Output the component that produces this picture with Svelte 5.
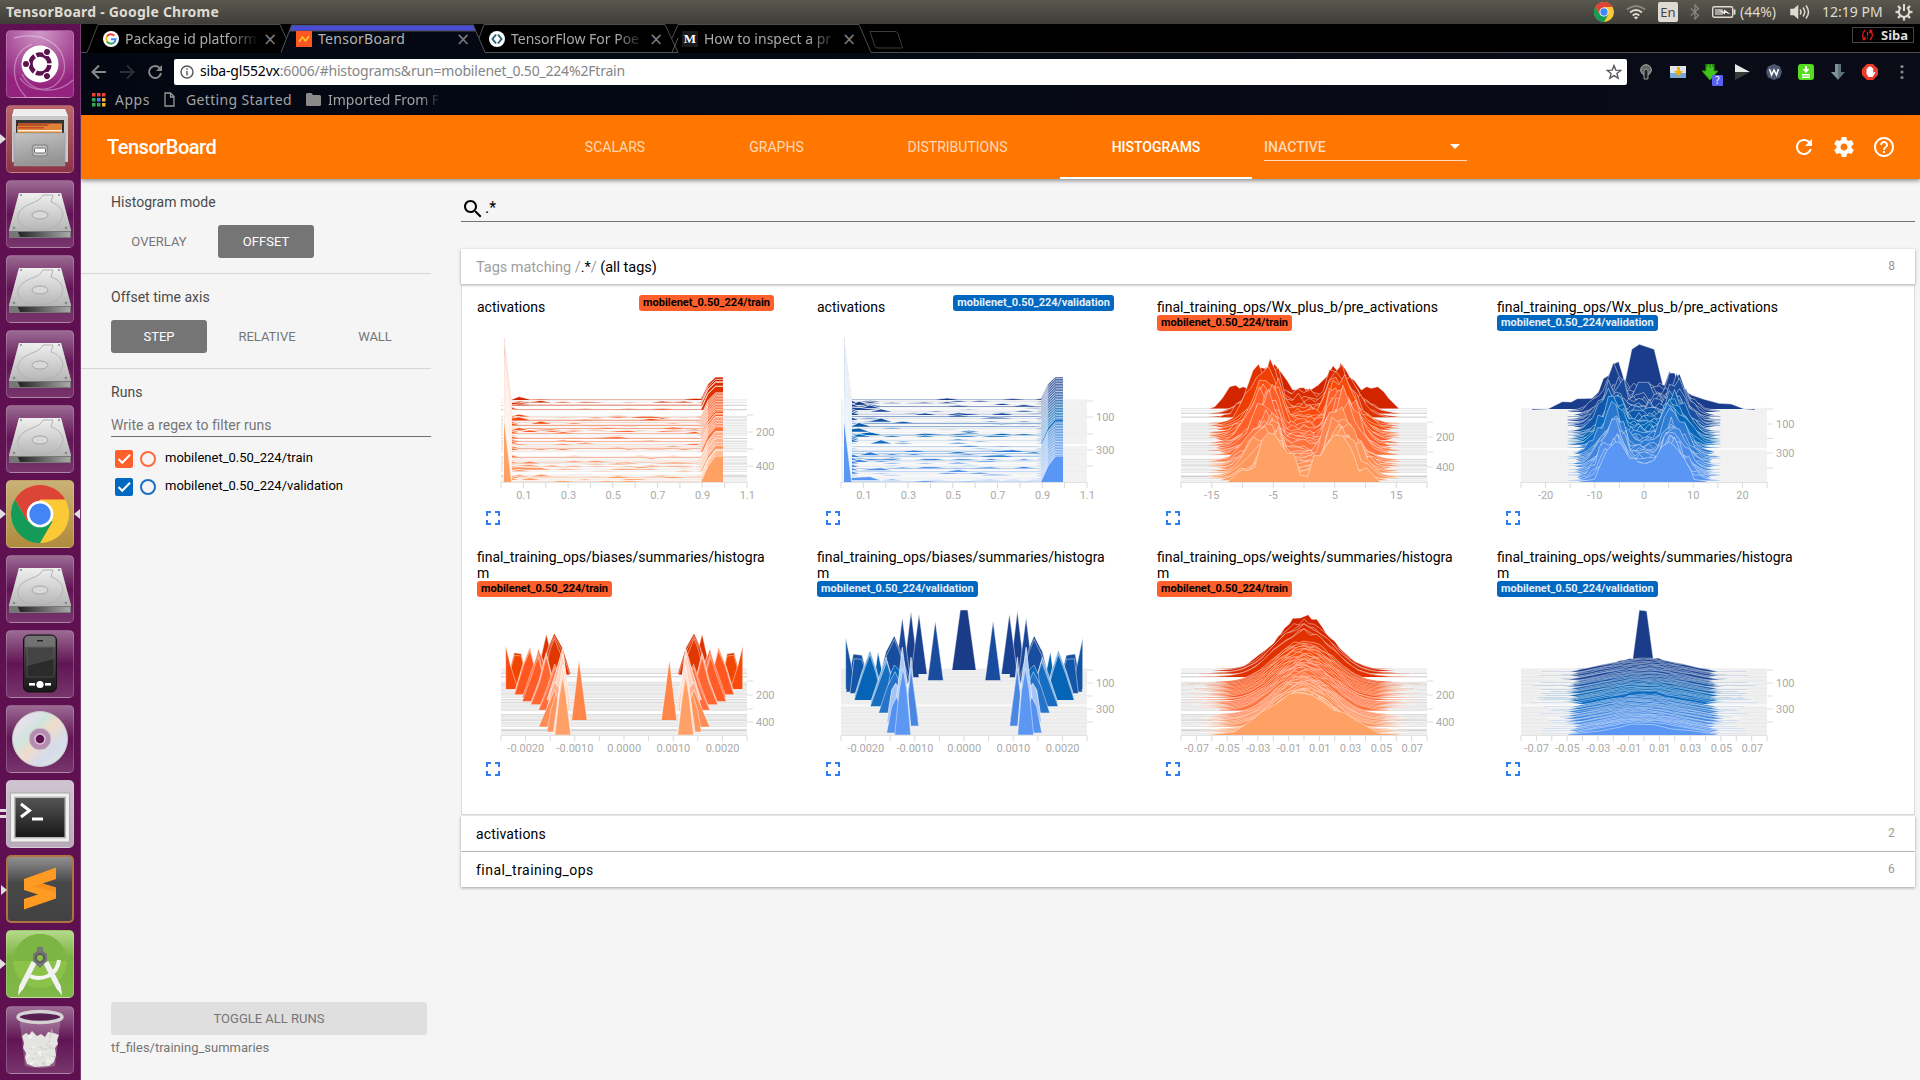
<script>
  function rng(seed) {
    let s = seed;
    return () => {
      s = (s * 1664525 + 1013904223) % 4294967296;
      return s / 4294967296;
    };
  }

  const trainStops = [[0, [211, 36, 0]], [0.15, [228, 52, 0]], [0.3, [250, 76, 10]], [0.5, [255, 98, 45]], [0.75, [255, 130, 76]], [1, [255, 160, 100]]];
  const validStops = [[0, [26, 60, 138]], [0.2, [26, 76, 158]], [0.45, [2, 102, 184]], [0.55, [30, 114, 202]], [0.8, [72, 138, 228]], [1, [90, 150, 243]]];

  function color(stops, t) {
    for (let i = 1; i < stops.length; i++) {
      if (t <= stops[i][0]) {
        const [a, ca] = stops[i - 1];
        const [b, cb] = stops[i];
        const f = (t - a) / (b - a);
        return `rgb(${ca.map((v, k) => Math.round(v + (cb[k] - v) * f)).join(',')})`;
      }
    }
    return `rgb(${stops[stops.length - 1][1].join(',')})`;
  }

  const trainSteps = [0, 0.03, 0.06, 0.068, 0.115, 0.12, 0.2, 0.215, 0.235, 0.25, 0.27, 0.29, 0.31, 0.33, 0.35, 0.37, 0.39, 0.41, 0.43, 0.465, 0.47, 0.5, 0.51, 0.53, 0.55, 0.57, 0.59, 0.61, 0.63, 0.69, 0.7, 0.72, 0.74, 0.76, 0.775, 0.785, 0.81, 0.83, 0.85, 0.87, 0.915, 0.925, 0.932, 0.95, 0.975, 1];
  const validSteps = Array.from({ length: 50 }, (_, i) => i / 49).filter((t) => Math.abs(t - 0.551) > 0.009);

  const toPath = (pts) => 'M' + pts.map(([x, y]) => `${x.toFixed(1)} ${y.toFixed(1)}`).join('L');

  function series(pts, base, fill) {
    const line = toPath(pts);
    return { line, area: `${line}L${pts[pts.length - 1][0].toFixed(1)} ${base}L${pts[0][0].toFixed(1)} ${base}Z`, fill };
  }

  // Explicit outlines are given in a triple-height sketch space.
  const wide = (ox, oy, list) => list.map(([x, y]) => [(x - ox) * 0.497 + 24, oy + y / 3]);

  function activations(steps, stops, seed, amp) {
    const r = rng(seed);
    return steps.map((t, i) => {
      const base = 400 + 82 * t;
      const pts = [[27, base - 62 - r() * 3], [31, base - 30], [34.6, base - (r() < 0.35 ? 2.6 : 0.6) * amp]];
      const loud = r() < 0.28;
      const level = r() < 0.3 || i === 0 ? 0.7 : 0.1;
      for (let x = 42; x < 220; x += 11) {
        const early = x < 70 ? 1.6 : 0.7;
        pts.push([x, base - level - (r() < (loud ? 0.5 : 0.1) ? r() * 2.2 * early * amp : 0)]);
      }
      pts.push([224, base - 0.6 - (i ? 0 : 0.8)], [231, base - 16], [238.5, base - 23 - 3 * t], [246, base - 23 - 3 * t]);
      const s = series(pts, base, color(stops, t));
      // The narrow first bin reads as layered tints rather than solid colour.
      s.veil = i === steps.length - 1 ? null : `M26.5 ${base}V${(base - 65).toFixed(1)}L35 ${base}Z`;
      return s;
    });
  }

  function humps(steps, stops, seed, top, unit, first, last, floor, peak, spread) {
    const r = rng(seed);
    const n = steps.length;
    return steps.map((t, i) => {
      const base = top + (482 - top) * t;
      const fill = color(stops, t);
      if (i === 0) return series(first, base, fill);
      if (i === n - 1) return series(last, base, fill);
      const width = 1.5 + r() * 1.1;
      const l = peak * (0.65 + r() * 0.6);
      const rr = peak * (0.65 + r() * 0.6);
      const lc = -5.4 + (r() - 0.5) * 1.8;
      const rc = 5.4 + (r() - 0.5) * 1.8;
      const reach = r() < 0.55 ? spread : spread - 2.5 + r() * 1.5;
      const pts = [];
      for (let u = -reach; u <= reach + 0.1; u += reach / 15) {
        const c = u < 0 ? lc : rc;
        let h = (u < 0 ? l : rr) * (0.74 * Math.exp(-((u - c) ** 2) / (2 * width * width)) + 0.28 * Math.exp(-((Math.abs(u) - 7.5) ** 2) / 20));
        if (Math.abs(u) < 3.5) h = Math.max(h * 0.8, floor * (1 - t * 0.6));
        h *= 0.72 + r() * 0.52;
        if (Math.abs(u) > 11.5) h *= 0.7;
        if (Math.abs(u) > reach - 0.6) h = 0.3;
        pts.push([147 + u * unit, base - h]);
      }
      return series(pts, base, fill);
    });
  }

  function bells(steps, stops, seed, first, last, peakBack, peakFront, shape, reachUnits) {
    const r = rng(seed);
    const n = steps.length;
    return steps.map((t, i) => {
      const base = 669 + 66 * t;
      const fill = color(stops, t);
      if (i === 0) return series(first, base, fill);
      if (i === n - 1) return series(last, base, fill);
      const peak = peakBack + (peakFront - peakBack) * Math.min(1, t * 4);
      const reach = reachUnits + r() * 1.6 - 0.8 + (t > 0.2 && t < 0.6 ? 0.6 : 0);
      const stretch = (0.86 + r() * 0.2) * (0.94 + 0.08 * t);
      const pts = [];
      for (let u = -reach; u <= reach + 0.01; u += reach / 18) {
        let h = peak * shape(Math.abs(u), stretch) * (0.95 + r() * 0.1);
        if (Math.abs(u) > reach - 0.3) h = 0.1;
        pts.push([147 + u * 15.4, base - h]);
      }
      return series(pts, base, fill);
    });
  }

  // Polygons of one half, mirrored about the centre of the plot.
  function mirrored(list, shift) {
    const out = [];
    for (const { p, c, wash } of list) {
      const left = p.map(([x, y]) => [x / 3 - shift, 540 + y / 3]);
      const right = left.map(([x, y]) => [294.4 - x, y]);
      for (const pts of [left, right]) {
        const d = toPath(pts);
        out.push({ line: d, area: d + 'Z', fill: c, wash });
      }
    }
    return out;
  }

  const biasTrain = mirrored([
    { p: [[262, 402], [289, 282], [318, 402]], c: '#de3300' },
    { p: [[268, 402], [296, 318], [313, 280], [338, 325], [362, 402]], c: '#d42c00' },
    { p: [[270, 404], [296, 325], [313, 289], [335, 330], [359, 404]], c: '#e03400' },
    { p: [[280, 412], [300, 330], [313, 296], [333, 345], [350, 412]], c: '#e03800' },
    { p: [[180, 440], [183, 375], [193, 338], [214, 341], [222, 378], [240, 440]], c: '#e84000' },
    { p: [[182, 445], [184, 380], [194, 346], [214, 348], [222, 385], [242, 445]], c: '#f04600' },
    { p: [[167, 447], [167, 318], [181, 375], [204, 447]], c: '#f74a0c' },
    { p: [[240, 455], [254, 370], [265, 325], [280, 365], [300, 455]], c: '#ff6a38', wash: 1 },
    { p: [[192, 463], [218, 375], [240, 320], [252, 372], [275, 463]], c: '#ff8055', wash: 1 },
    { p: [[194, 463], [220, 378], [240, 332], [253, 380], [277, 463]], c: '#ff571f' },
    { p: [[217, 472], [242, 400], [264, 338], [280, 400], [296, 472]], c: '#ff6430' },
    { p: [[217, 484], [243, 412], [264, 350], [280, 410], [303, 484]], c: '#ff5c27' },
    { p: [[241, 493], [268, 420], [289, 340], [306, 410], [326, 493]], c: '#ff8358', wash: 1 },
    { p: [[243, 493], [269, 427], [289, 350], [306, 418], [326, 493]], c: '#ff6632' },
    { p: [[266, 509], [292, 440], [314, 372], [335, 410], [358, 509]], c: '#ff6b38' },
    { p: [[266, 509], [294, 446], [314, 382], [335, 420], [358, 509]], c: '#ff6e3c' },
    { p: [[291, 480], [318, 395], [338, 325], [350, 420], [362, 480]], c: '#ffb89b', wash: 1 },
    { p: [[300, 500], [322, 410], [338, 342], [351, 430], [362, 500]], c: '#ffd2bf', wash: 1 },
    { p: [[291, 510], [304, 450], [314, 425], [328, 445], [348, 510]], c: '#ffb091', wash: 1 },
    { p: [[365, 540], [387, 360], [411, 540]], c: '#ff8448' },
    { p: [[266, 560], [294, 495], [314, 450], [330, 500], [350, 560]], c: '#ff8c54' },
    { p: [[291, 575], [302, 510], [318, 460], [332, 500], [350, 575]], c: '#ff9660' },
    { p: [[310, 580], [330, 430], [338, 375], [348, 440], [362, 580]], c: '#ffd9c8', wash: 1 },
    { p: [[315, 584], [328, 470], [338, 410], [348, 470], [362, 584]], c: '#ffa066' }
  ], 27);

  const biasValid = [
    series([[135, 670], [143.3, 610], [150.7, 610], [159, 670]], 670, '#1a3c88'),
    ...mirrored([
      { p: [[309, 412], [333, 214], [357, 412]], c: '#1a3f8d' },
      { p: [[333, 402], [357, 222], [381, 402]], c: '#1a4292' },
      { p: [[283, 425], [307, 233], [332, 425]], c: '#1a4797' },
      { p: [[383, 421], [406, 243], [430, 421]], c: '#1a4c9e' },
      { p: [[235, 425], [258, 335], [283, 287], [300, 330], [330, 425]], c: '#1a4694' },
      { p: [[238, 430], [260, 345], [283, 298], [300, 340], [325, 430]], c: '#194d9e' },
      { p: [[138, 455], [160, 342], [186, 346], [215, 455]], c: '#17509f' },
      { p: [[137, 448], [137, 293], [152, 365], [168, 448]], c: '#1253a3' },
      { p: [[150, 460], [162, 356], [186, 358], [215, 460]], c: '#1256aa' },
      { p: [[215, 470], [234, 335], [262, 470]], c: '#0563b2' },
      { p: [[163, 470], [186, 395], [210, 330], [228, 385], [250, 470]], c: '#5f9bd2', wash: 1 },
      { p: [[163, 480], [187, 405], [210, 343], [228, 400], [250, 480]], c: '#0664b6' },
      { p: [[211, 490], [238, 410], [258, 352], [275, 410], [295, 490]], c: '#67a2dc', wash: 1 },
      { p: [[211, 499], [238, 425], [260, 365], [276, 420], [298, 499]], c: '#176dc0' },
      { p: [[255, 500], [270, 405], [283, 375], [298, 390], [312, 500]], c: '#0868bc' },
      { p: [[236, 518], [262, 440], [285, 395], [305, 440], [330, 518]], c: '#2574ca' },
      { p: [[260, 545], [275, 450], [287, 430], [305, 460], [330, 545]], c: '#a4c5f5', wash: 1 },
      { p: [[300, 540], [325, 440], [333, 352], [342, 440], [356, 540]], c: '#82aeea', wash: 1 },
      { p: [[310, 557], [326, 450], [333, 385], [342, 450], [356, 557]], c: '#4a87e2' },
      { p: [[280, 560], [298, 400], [307, 322], [320, 420], [332, 560]], c: '#a9c8f6', wash: 1 },
      { p: [[260, 578], [275, 500], [290, 470], [300, 500], [312, 578]], c: '#5591ef' },
      { p: [[284, 584], [298, 450], [309, 385], [320, 450], [332, 584]], c: '#5b97f3' }
    ], 17)
  ];

  const preTrainFirst = wide(82, 280, [[140, 385], [150, 380], [165, 355], [180, 320], [192, 316], [200, 325], [207, 320], [220, 328], [230, 290], [238, 300], [245, 278], [258, 258], [262, 275], [270, 252], [285, 280], [297, 305], [307, 330], [325, 327], [345, 328], [358, 315], [375, 290], [388, 257], [398, 275], [403, 248], [418, 290], [430, 300], [445, 330], [455, 320], [465, 325], [478, 320], [490, 335], [500, 355], [520, 385]]);
  const preTrainLast = wide(82, 280, [[177, 604], [190, 588], [205, 568], [215, 572], [230, 562], [245, 480], [258, 458], [270, 462], [282, 490], [297, 520], [309, 520], [322, 585], [337, 590], [350, 525], [362, 528], [375, 495], [390, 465], [408, 468], [422, 500], [430, 525], [440, 574], [455, 563], [468, 585], [482, 604]]);
  const preValidFirst = wide(767, 280, [[790, 390], [820, 388], [850, 365], [868, 366], [880, 356], [910, 355], [930, 325], [945, 312], [960, 325], [973, 330], [990, 208], [1005, 193], [1035, 208], [1055, 330], [1068, 320], [1083, 312], [1095, 330], [1110, 345], [1135, 358], [1165, 370], [1190, 372], [1218, 388], [1237, 390]]);
  const preValidLast = wide(767, 280, [[885, 604], [915, 598], [925, 560], [940, 510], [958, 485], [968, 490], [985, 535], [995, 535], [1005, 548], [1020, 550], [1035, 540], [1050, 500], [1066, 485], [1080, 505], [1095, 535], [1110, 575], [1115, 598], [1140, 604]]);
  const weightTrainFirst = wide(82, 540, [[150, 387], [185, 385], [210, 378], [240, 343], [270, 310], [290, 265], [300, 252], [307, 235], [322, 234], [338, 224], [345, 238], [355, 238], [368, 265], [385, 310], [415, 343], [435, 370], [470, 385], [510, 387]]);
  const weightTrainLast = wide(82, 540, [[145, 583], [190, 575], [220, 545], [245, 515], [275, 490], [300, 462], [320, 458], [345, 465], [372, 490], [388, 510], [410, 518], [445, 550], [480, 580], [520, 583]]);
  const weightValidFirst = wide(767, 540, [[870, 387], [930, 384], [992, 356], [1005, 210], [1020, 213], [1033, 356], [1100, 384], [1150, 387]]);
  const weightValidLast = wide(767, 540, [[862, 583], [925, 573], [965, 562], [990, 552], [1035, 554], [1070, 567], [1110, 572], [1160, 583]]);

  const peaked = (u) => 1 / (1 + Math.exp((u - 2.1) * 1.25)) * 1.05;
  const tented = (u, k) => (u < 0.9 ? 1 : Math.max(0.012, 1 - (u - 0.9) / (4.1 * k)));

  const preValid = humps(validSteps, validStops, 41, 409, 4.92, preValidFirst, preValidLast, 24, 36, 15.5);
  preValid.splice(6, 0, series(wide(767, 280, [[955, 400], [975, 372], [990, 350], [1003, 307], [1024, 307], [1037, 350], [1055, 378], [1075, 400]]), 416, '#1b4a9b'));

  const tr = 'mobilenet_0.50_224/train';
  const va = 'mobilenet_0.50_224/validation';
  const every = (n, w) => Array.from({ length: n + 1 }, (_, i) => 24 + i * w);
  const labels = (list, start, gap) => list.map((text, i) => ({ text, x: start + i * gap }));

  const rightTrain = (ys) => ys.map((y, i) => ({ y, text: ['', '200', '', '400'][i] }));
  const rightValid = (ys) => ys.map((y, i) => ({ y, text: ['', '100', '', '300', ''][i] }));

  const biasLabels = labels(['-0.0020', '-0.0010', '0.0000', '0.0010', '0.0020'], 48.8, 49.2);
  const weightLabels = labels(['-0.07', '-0.05', '-0.03', '-0.01', '0.01', '0.03', '0.05', '0.07'], 39.6, 30.8);

  const charts = [
    { title: 'activations', run: tr, kind: 'train', float: true, row: 1, top: 400, steps: trainSteps, shapes: activations(trainSteps, trainStops, 7, 0.9), ticks: every(11, 22.36), labels: labels(['0.1', '0.3', '0.5', '0.7', '0.9', '1.1'], 46.8, 44.7), right: rightTrain([415, 432, 449, 466]) },
    { title: 'activations', run: va, kind: 'valid', float: true, row: 1, top: 400, steps: validSteps, shapes: activations(validSteps, validStops, 23, 1.1), ticks: every(11, 22.36), labels: labels(['0.1', '0.3', '0.5', '0.7', '0.9', '1.1'], 46.8, 44.7), right: rightValid([401, 417, 434, 450, 466]) },
    { title: 'final_training_ops/Wx_plus_b/pre_activations', run: tr, kind: 'train', row: 1, top: 408.5, steps: trainSteps, shapes: humps(trainSteps, trainStops, 11, 408.5, 6.15, preTrainFirst, preTrainLast, 21, 46, 15.5), ticks: every(8, 30.75), labels: labels(['-15', '-5', '5', '15'], 54.8, 61.5), right: rightTrain([422, 437, 452, 467]) },
    { title: 'final_training_ops/Wx_plus_b/pre_activations', run: va, kind: 'valid', row: 1, top: 408.5, steps: validSteps, shapes: preValid, ticks: every(10, 24.6), labels: labels(['-20', '-10', '0', '10', '20'], 48.6, 49.2), right: rightValid([409, 424, 438.5, 453, 468]) },
    { title: 'final_training_ops/biases/summaries/histogram', run: tr, kind: 'train', row: 2, top: 669, steps: trainSteps, shapes: biasTrain, ticks: every(10, 24.6), labels: biasLabels, right: rightTrain([681, 695, 709, 722]) },
    { title: 'final_training_ops/biases/summaries/histogram', run: va, kind: 'valid', row: 2, top: 669, steps: validSteps, shapes: biasValid, ticks: every(10, 24.6), labels: biasLabels, right: rightValid([670, 683, 696, 709, 722]) },
    { title: 'final_training_ops/weights/summaries/histogram', run: tr, kind: 'train', row: 2, top: 669, steps: trainSteps, shapes: bells(trainSteps, trainStops, 5, weightTrainFirst, weightTrainLast, 52, 41, peaked, 6.4), ticks: every(16, 15.375), labels: weightLabels, right: rightTrain([681, 695, 709, 722]) },
    { title: 'final_training_ops/weights/summaries/histogram', run: va, kind: 'valid', row: 2, top: 669, steps: validSteps, shapes: bells(validSteps, validStops, 9, weightValidFirst, weightValidLast, 12, 11.5, tented, 6), ticks: every(16, 15.375), labels: weightLabels, right: rightValid([670, 683, 696, 709, 722]), accent: true }
  ];

  const accentLine = toPath(wide(767, 540, [[890, 489], [915, 482], [950, 472], [975, 469], [988, 459], [1005, 457], [1038, 457], [1055, 468], [1095, 478], [1140, 489]]));

  const tiles = [
    { icon: 'dash' }, { icon: 'files', left: 1 }, { icon: 'disk' }, { icon: 'disk' }, { icon: 'disk' }, { icon: 'disk' },
    { icon: 'chrome', left: 1, right: 1 }, { icon: 'disk' }, { icon: 'phone' }, { icon: 'cd' }, { icon: 'term', left: 2 },
    { icon: 'sublime', left: 1 }, { icon: 'studio', left: 1 }, { icon: 'trash' }
  ];
  const rays = Array.from({ length: 8 }, (_, i) => i * 45);

  // Creases of the crumpled paper in the bin, as small facets.
  const pr = rng(77);
  const facets = Array.from({ length: 46 }, () => {
    const x = 20 + pr() * 28;
    const y = 29 + pr() * 28;
    const p = () => ((pr() - 0.5) * 9).toFixed(1);
    return { d: `M${x.toFixed(1)} ${y.toFixed(1)}l${p()} ${p()} ${p()} ${p()}z`, fill: pr() < 0.5 ? '#fff' : '#c4c4bf' };
  });
</script>

{#snippet chromeLogo()}
  <circle cx="24" cy="24" r="24" fill="#fbc936" />
  <path d="M3.2 12A24 24 0 0 1 44.8 12H24L13.6 30Z" fill="#db4437" />
  <path d="M3.2 12A24 24 0 0 0 24 48L34.4 30H13.6Z" fill="#139b57" />
  <circle cx="24" cy="24" r="11" fill="#fff" />
  <circle cx="24" cy="24" r="8.8" fill="#4285f4" />
{/snippet}

<div class="desktop">
  <svg class="defs" aria-hidden="true">
    <defs>
      <linearGradient id="metal" x1="0" y1="0" x2="0" y2="1"><stop offset="0" stop-color="#f0f0f0" /><stop offset="1" stop-color="#b5b5b5" /></linearGradient>
      <linearGradient id="steel" x1="0" y1="0" x2="0.3" y2="1"><stop offset="0" stop-color="#c4c4c4" /><stop offset="1" stop-color="#949494" /></linearGradient>
      <linearGradient id="dark" x1="0" y1="0" x2="0" y2="1"><stop offset="0" stop-color="#555" /><stop offset="1" stop-color="#181818" /></linearGradient>
      <linearGradient id="edge" x1="0" y1="0" x2="1" y2="0"><stop offset="0" stop-color="#222" /><stop offset="1" stop-color="#aaa" /></linearGradient>
      <linearGradient id="disc" x1="0" y1="0" x2="1" y2="1"><stop offset="0" stop-color="#e8e8e8" /><stop offset="0.2" stop-color="#e6e0ea" /><stop offset="0.35" stop-color="#cfe5dc" /><stop offset="0.5" stop-color="#f1dccb" /><stop offset="0.7" stop-color="#d5dcea" /><stop offset="1" stop-color="#e5e5e5" /></linearGradient>
    </defs>
  </svg>

  <div class="menubar">
    <span class="wtitle">TensorBoard - Google Chrome</span>
    <div class="tray">
      <svg class="t-chrome" viewBox="0 0 48 48" width="20" height="20">{@render chromeLogo()}</svg>
      <svg class="t-wifi" width="20" height="16" viewBox="0 0 20 16" fill="none" stroke-width="1.8"><path d="M1 5.500Q10-1.500 19 5.500" stroke="#8b887f" /><path d="M4 8.500Q10 3.500 16 8.500" stroke="#dfdbd2" /><path d="M6.700 11.500Q10 8.500 13.300 11.500" stroke="#dfdbd2" /><path d="M10 15.500l-2.200-2.200q2.200-1.600 4.400 0z" fill="#dfdbd2" /></svg>
      <span class="lang">En</span>
      <svg class="t-bt" width="10" height="16" viewBox="0 0 10 16" fill="none" stroke="#8b887f" stroke-width="1.2"><path d="M1 4.500l7.500 7L5 15V1l3.500 3.500-7.500 7" /></svg>
      <svg class="t-bat" width="24" height="14" viewBox="0 0 24 14"><rect x="0.7" y="1.7" width="20" height="10.6" rx="1.5" fill="none" stroke="#dfdbd2" stroke-width="1.4" /><rect x="3" y="4" width="8" height="6" fill="#a5a299" /><rect x="21.5" y="4.5" width="2" height="5" fill="#dfdbd2" /><path d="M6 4.500l6 2.500V4.500l7 5-6-2v2z" fill="#fff" /></svg>
      <span class="t-pct">(44%)</span>
      <svg class="t-vol" width="21" height="16" viewBox="0 0 21 16" fill="none" stroke="#dfdbd2" stroke-width="1.5"><path d="M1 5.500h3l3.500-3v11L4 10.500H1z" fill="#dfdbd2" /><path d="M10 5.500q2 2.500 0 5M13 3.500q3.500 4.500 0 9M16 1.500q5 6.500 0 13" /></svg>
      <span class="t-time">12:19 PM</span>
      <svg class="t-gear" width="18" height="18" viewBox="-9 -9 18 18" stroke="#dfdbd2" fill="none"><path d="M-3-4.500A5.200 5.200 0 1 0 3-4.500M0-8V-1" stroke-width="2" />{#each rays.slice(1) as a}<path d="M0-5.500V-8.500" stroke-width="2.200" transform="rotate({a})" />{/each}</svg>
    </div>
  </div>

  <div class="below">
    <nav class="launcher">
      {#each tiles as t}
        <div class="tile {t.icon}">
          {#if t.left === 1}<i class="tri"></i>{/if}
          {#if t.left === 2}<i class="bars"></i>{/if}
          {#if t.right}<i class="tri back"></i>{/if}
          <svg viewBox="0 0 68 68" width="68" height="68">
            {#if t.icon === 'dash'}
              <g fill="none" stroke="#fff" opacity="0.35" stroke-width="1.300"><path d="M8 8C40 0 62 18 58 42 52 62 26 66 14 48" /><path d="M20 67C2 48 6 22 26 14" /><path d="M67 50C50 66 24 62 16 44" /></g>
              <circle cx="34" cy="34" r="18.500" fill="#fff" />
              <circle cx="34" cy="34" r="9.500" fill="none" stroke="#5d1150" stroke-width="4.500" stroke-dasharray="17.900 2" stroke-dashoffset="-1" />
              {#each [0, 120, 240] as a}<circle cx="20" cy="34" r="3.600" fill="#5d1150" stroke="#fff" stroke-width="1.200" transform="rotate({a} 34 34)" />{/each}
            {:else if t.icon === 'files'}
              <path d="M6 11l2-7h51l3 7v46H6z" fill="#c9c9c9" /><path d="M6 11l2-7h51l3 7z" fill="#eee" /><path d="M10 15h48v16H10z" fill="#333" />
              <path d="M12 18h44v11H12z" fill="#b6532a" /><path d="M11 21h30l3-2h12v12H11z" fill="#df8436" /><path d="M12 22h26v1.500H12z" fill="#c4482a" /><path d="M12 25h44v1.500H12z" fill="#fff0d8" /><path d="M12 27.500h44V31H12z" fill="#d98b38" />
              <path d="M8 28h51v33H8z" fill="url(#steel)" stroke="#999" stroke-width="0.600" /><rect x="26.500" y="40" width="15" height="11" rx="3" fill="#ccc" stroke="#8c8c8c" stroke-width="1.600" /><rect x="28.500" y="43" width="11" height="5" rx="1" fill="#fff" stroke="#666" />
            {:else if t.icon === 'disk'}
              <path d="M13 13h42l10 37v7H3v-7z" fill="#a8a8a8" /><path d="M13 13h42l10 38H3z" fill="url(#metal)" /><path d="M3 51h62v7H3z" fill="#777" /><path d="M12 52h52v5H14z" fill="url(#edge)" />
              <path d="M37 15c-4 8-13 7-20 13-9 7-6 17 5 20 10 3 24 2 30-4 10-9 3-19-7-22l2-7z" fill="none" stroke="#b2b2b2" stroke-width="1" /><ellipse cx="34" cy="35" rx="8" ry="4" fill="#d8d8d8" stroke="#a5a5a5" />
              <circle cx="15" cy="15" r="1" fill="#888" /><circle cx="53" cy="15" r="1" fill="#888" /><circle cx="8" cy="48" r="1.300" fill="#888" /><circle cx="60" cy="48" r="1.300" fill="#888" />
            {:else if t.icon === 'chrome'}
              <g transform="translate(5 5) scale(1.210)">{@render chromeLogo()}</g>
            {:else if t.icon === 'phone'}
              <rect x="17.500" y="5" width="33" height="57" rx="5" fill="url(#dark)" stroke="#111" /><path d="M19 17V9q0-3 4-3h22q4 0 4 3v8z" fill="#8a8a8a" opacity="0.600" /><rect x="21" y="17" width="27" height="30" fill="#2b2b2b" stroke="#555" stroke-width="0.700" /><path d="M21 17h27v12L21 36z" fill="#fff" opacity="0.120" /><rect x="31" y="10" width="6" height="1.500" fill="#222" />
              <circle cx="34" cy="54.500" r="3.600" fill="#fff" /><rect x="23" y="53" width="6" height="2.600" fill="#fff" /><rect x="39" y="53" width="6" height="2.600" fill="#fff" />
            {:else if t.icon === 'cd'}
              <circle cx="34" cy="34" r="27.500" fill="url(#disc)" stroke="#c9c9c9" /><circle cx="34" cy="34" r="11" fill="#b58bb0" stroke="#ccc" /><circle cx="34" cy="34" r="5" fill="#5d1150" stroke="#d9c5d6" stroke-width="1.500" />
            {:else if t.icon === 'term'}
              <rect x="4.500" y="13" width="59" height="49" fill="#efefef" stroke="#aaa" /><rect x="8" y="16.500" width="52" height="42" fill="#b9b9b9" /><rect x="9.500" y="18" width="49" height="39" fill="url(#dark)" />
              <path d="M15 24l8.500 6.500L15 37" fill="none" stroke="#fff" stroke-width="3" /><path d="M26 39h11" stroke="#fff" stroke-width="3" />
            {:else if t.icon === 'sublime'}
              <path d="M18 24L50 12.500V24L36.500 28.500 50 32.500V43.500L18 54.500V44L32 39.500 18 35Z" fill="#ff9a22" /><path d="M36.500 28.500L50 32.500V37L27 31.500z" fill="#f08c18" opacity="0.700" />
            {:else if t.icon === 'studio'}
              <circle cx="34" cy="31" r="27" fill="#8bc34a" /><path d="M7 31a27 27 0 0 1 54 0z" fill="#7db545" />
              <path d="M24 46q8 4 18 0 10-5 11-16" fill="none" stroke="#f5f5f5" stroke-width="4" /><path d="M30 33L17 58l-4 5 1-7 12-24zM38 33l13 25 4 5-1-7-12-24z" fill="#f2f2f2" stroke="#f2f2f2" stroke-width="1.500" />
              <path d="M31 17h6v4l4 3v7l-7 7-7-7v-7l4-3z" fill="#757575" /><circle cx="34" cy="28" r="4" fill="#8bc34a" stroke="#5c5c5c" stroke-width="2" />
            {:else}
              <path d="M13 10h42l-6 50q-15 4-30 0z" fill="#fff" opacity="0.220" />
              <path d="M16 30l4-3 3 2 3-4 5 5 4-2 4 3 3-5 6 1 5 2-2 5 1 4-3 4 1 7-2 7-5 4-14 1-8-3-2-6 1-5-3-5 1-5z" fill="#e4e4e1" />
              {#each facets as f}<path d={f.d} fill={f.fill} opacity="0.600" />{/each}
              <ellipse cx="34" cy="11" rx="22" ry="5.500" fill="#572050" stroke="#d5d2d4" stroke-width="3.500" />
            {/if}
          </svg>
        </div>
      {/each}
    </nav>

    <div class="browser">
      <div class="tabs">
        <svg class="tabshape" width="1839" height="29" viewBox="81 24 1839 29" fill="none" stroke="#4d4d4d">
          <path d="M81 52.500H87L98 24.500H280L286 38" /><path d="M678 52.500L665 24.500H484L479 38M678 52.500H672" /><path d="M672 38L678 24.500H859L871 52.500H1920" />
          <path d="M281 53L292 24.500H473L485 53Z" fill="#030812" stroke="none" /><path d="M292 25H473L475.500 31H289.500Z" fill="#4a4dd4" /><path d="M281 52.500L292 24.500M473 24.500L485 52.500H672L678 38" stroke="#555" />
          <path d="M870 31.500H895Q897 31.500 898 33.500L902.500 48H878Q875.500 48 874.800 46Z" stroke="#3c3c3c" />
        </svg>
        <div class="tab">
          <svg width="16" height="16" viewBox="0 0 16 16" class="fav"><circle cx="8" cy="8" r="8" fill="#fff" /><g fill="none" stroke-width="2"><path d="M4 5.500A4.700 4.700 0 0 1 11.300 4.700" stroke="#ea4335" /><path d="M4 5.500A5 5 0 0 0 4 10.500" stroke="#fbbc05" /><path d="M4 10.500A4.700 4.700 0 0 0 11 11.500" stroke="#34a853" /><path d="M8 8.300H12.600Q12.500 10.500 11 11.500" stroke="#4285f4" /></g></svg>
          <span class="tt fade">Package id platform</span><span class="x">×</span>
        </div>
        <div class="tab">
          <svg width="16" height="16" viewBox="0 0 16 16" class="fav"><path d="M0 0h16v16H0z" fill="#ff5722" /><path d="M3 11l3.500-5 3 4L13 5" fill="none" stroke="#ffca28" stroke-width="1.500" /></svg>
          <span class="tt lit">TensorBoard</span><span class="x">×</span>
        </div>
        <div class="tab">
          <svg width="16" height="16" viewBox="0 0 16 16" class="fav"><circle cx="8" cy="8" r="8" fill="#fff" /><path d="M7 3.500L3.500 8 7 12.500M9 3.500L12.500 8 9 12.500" fill="none" stroke="#2b6675" stroke-width="2" /></svg>
          <span class="tt fade">TensorFlow For Poe</span><span class="x">×</span>
        </div>
        <div class="tab">
          <span class="fav medium">M</span>
          <span class="tt fade">How to inspect a pr</span><span class="x">×</span>
        </div>
        <div class="profile"><svg width="13" height="12" viewBox="0 0 13 12" fill="none" stroke="#e01818" stroke-width="1.300"><path d="M4 1Q-.5 6 3.500 10.500M1.500 10.500h2.500v-3M9 11q4.500-5 .5-9.500M11.500 1.500H9v3M6.500 3v4M6.500 8.500v1.300" /></svg><b>Siba</b></div>
      </div>

      <div class="toolbar">
        <svg class="nav" width="16" height="16" viewBox="0 0 16 16" fill="none" stroke="#8a8a8a" stroke-width="2"><path d="M15 8H2M8 1.500L1.500 8 8 14.500" /></svg>
        <svg class="nav" width="16" height="16" viewBox="0 0 16 16" fill="none" stroke="#2c2f35" stroke-width="2"><path d="M1 8h13M8 1.500L14.500 8 8 14.500" /></svg>
        <svg class="nav" width="16" height="16" viewBox="0 0 16 16"><path d="M13 4.500A6 6 0 1 0 14 9" fill="none" stroke="#8a8a8a" stroke-width="2" /><path d="M15 1v6H9z" fill="#8a8a8a" /></svg>
        <div class="url">
          <svg width="14" height="14" viewBox="0 0 14 14" fill="none" stroke="#555" stroke-width="1.400"><circle cx="7" cy="7" r="6" /><path d="M7 6v4.500M7 3.300v1.500" /></svg>
          <span class="addr"><b>siba-gl552vx</b>:6006/#histograms&amp;run=mobilenet_0.50_224%2Ftrain</span>
          <svg class="star" width="16" height="16" viewBox="0 0 16 16" fill="none" stroke="#555" stroke-width="1.300"><path d="M8 1.500l1.800 4.600 4.900.3-3.800 3.100 1.300 4.800L8 11.600l-4.200 2.700 1.300-4.800L1.300 6.400l4.900-.3z" /></svg>
        </div>
        <div class="ext">
          <svg viewBox="0 0 16 16"><circle cx="8" cy="6" r="5.300" fill="#666" stroke="#b0b0b0" /><path d="M6 6.500q2-3 4 0V15H6z" fill="#222" stroke="#999" /></svg>
          <svg viewBox="0 0 16 16"><path d="M0 2h16v12H0z" fill="#dfe3ea" /><path d="M0 9h16v5H0z" fill="#7ba7d3" /><path d="M7 3h3v4h3l-4.500 5L4 7h3z" fill="#f0b400" /></svg>
          <span class="dl"><svg viewBox="0 0 16 16"><path d="M4 0h8v7h4l-8 9-8-9h4z" fill="#43c41a" stroke="#2a9010" /><path d="M5 0v3M8 0v4M11 0v3" stroke="#1c6b08" /></svg><em>?</em></span>
          <svg viewBox="0 0 16 16"><path d="M1 0l15 8H1z" fill="#e8e8e8" /><path d="M1 16l15-8H1z" fill="#3a3a3a" /></svg>
          <svg viewBox="0 0 16 16"><path d="M8 0l6 2.500 2 5.500-2 5.500L8 16l-6-2.500L0 8l2-5.500z" fill="#4c5770" /><path d="M3.500 5l2 6L8 6l2.500 5 2-6" stroke="#fff" stroke-width="1.500" fill="none" /></svg>
          <svg viewBox="0 0 16 16"><rect width="16" height="16" rx="3" fill="#56dc1e" /><path d="M7 2h2v3h2.500L8 9 4.500 5H7zM4 10h8v1.500H4zM4 12.500h8V14H4z" fill="#fff" /></svg>
          <svg viewBox="0 0 16 16"><path d="M5 0h6v8h4l-7 8-7-8h4z" fill="#5f727c" /><path d="M5 0h3v15L1 8h4z" fill="#7f929b" /></svg>
          <svg viewBox="0 0 16 16"><path d="M5 0h6l5 5v6l-5 5H5l-5-5V5z" fill="#f0392b" /><path d="M4.500 7V4.500h1.300V3h1.400V2.300h1.400V3H10v1h1.200v5l1.300-1.200 1 .8L10.500 13H6.500L4.500 10z" fill="#fff" /></svg>
          <svg viewBox="0 0 16 16" fill="#858585"><circle cx="8" cy="2.500" r="1.600" /><circle cx="8" cy="8" r="1.600" /><circle cx="8" cy="13.500" r="1.600" /></svg>
        </div>
      </div>

      <div class="bookmarks">
        <svg width="14" height="14" viewBox="0 0 14 14"><g fill="#ea4335"><path d="M0 0h3.500v3.500H0zM5 0h3.500v3.500H5zM10 0h3.500v3.500H10z" /></g><path d="M0 5h3.500v3.500H0zM0 10h3.500v3.500H0zM5 10h3.500v3.500H5z" fill="#34a853" /><path d="M5 5h3.500v3.500H5z" fill="#4285f4" /><path d="M10 5h3.500v3.500H10zM10 10h3.500v3.500H10z" fill="#fbb03b" /></svg>
        <span class="bm apps">Apps</span>
        <svg width="11" height="15" viewBox="0 0 11 15" fill="none" stroke="#999" stroke-width="1.300"><path d="M1 1h5.500L10 4.500V14H1zM6.500 1v4H10" /></svg>
        <span class="bm start">Getting Started</span>
        <svg width="15" height="13" viewBox="0 0 15 13"><path d="M0 1.500Q0 0 1.500 0H5.500L7 2H13.500Q15 2 15 3.500V11.500Q15 13 13.500 13H1.500Q0 13 0 11.500z" fill="#8b8b8b" /></svg>
        <span class="bm import">Imported From F</span>
      </div>

      <header class="appbar">
        <span class="logo">TensorBoard</span>
        <span class="nt n1">SCALARS</span><span class="nt n2">GRAPHS</span><span class="nt n3">DISTRIBUTIONS</span><span class="nt n4 on">HISTOGRAMS</span>
        <div class="inactive"><span>INACTIVE</span><svg width="10" height="5" viewBox="0 0 10 5"><path d="M0 0h10L5 5z" fill="#fff" /></svg></div>
        <div class="actions">
          <svg viewBox="0 0 24 24"><path d="M17.650 6.350C16.200 4.900 14.210 4 12 4c-4.420 0-7.990 3.580-7.990 8s3.570 8 7.990 8c3.730 0 6.840-2.550 7.730-6h-2.080c-.82 2.330-3.040 4-5.650 4-3.310 0-6-2.690-6-6s2.690-6 6-6c1.660 0 3.140.69 4.220 1.780L13 11h7V4l-2.350 2.350z" /></svg>
          <svg viewBox="0 0 24 24"><path d="M19.430 12.980c.04-.32.07-.64.07-.98s-.03-.66-.07-.98l2.110-1.650c.19-.15.24-.42.12-.64l-2-3.460c-.12-.22-.39-.3-.61-.22l-2.490 1c-.52-.4-1.080-.73-1.690-.98l-.38-2.650C14.460 2.180 14.250 2 14 2h-4c-.25 0-.46.18-.49.42l-.38 2.650c-.61.25-1.170.59-1.690.98l-2.490-1c-.23-.09-.49 0-.61.22l-2 3.460c-.13.22-.07.49.12.64l2.110 1.650c-.04.32-.07.65-.07.98s.03.66.07.98l-2.110 1.650c-.19.15-.24.42-.12.64l2 3.460c.12.22.39.3.61.22l2.490-1c.52.4 1.080.73 1.690.98l.38 2.650c.03.24.24.42.49.42h4c.25 0 .46-.18.49-.42l.38-2.650c.61-.25 1.170-.59 1.690-.98l2.490 1c.23.09.49 0 .61-.22l2-3.460c.12-.22.07-.49-.12-.64l-2.110-1.650zM12 15.500c-1.930 0-3.500-1.570-3.500-3.500s1.570-3.500 3.500-3.500 3.500 1.570 3.500 3.500-1.570 3.500-3.500 3.500z" /></svg>
          <svg viewBox="0 0 24 24"><path d="M11 18h2v-2h-2v2zm1-16C6.480 2 2 6.480 2 12s4.480 10 10 10 10-4.480 10-10S17.520 2 12 2zm0 18c-4.410 0-8-3.590-8-8s3.590-8 8-8 8 3.590 8 8-3.590 8-8 8zm0-14c-2.210 0-4 1.790-4 4h2c0-1.100.9-2 2-2s2 .9 2 2c0 2-3 1.750-3 5h2c0-2.250 3-2.500 3-5 0-2.210-1.790-4-4-4z" /></svg>
        </div>
      </header>

      <div class="page">
        <aside>
          <section class="mode"><h3>Histogram mode</h3><div class="btns"><span>OVERLAY</span><span class="sel">OFFSET</span></div></section>
          <section class="mode"><h3>Offset time axis</h3><div class="btns"><span class="sel">STEP</span><span>RELATIVE</span><span>WALL</span></div></section>
          <section class="runs">
            <h3>Runs</h3>
            <div class="filter">Write a regex to filter runs</div>
            {#each [['train', tr], ['valid', va]] as [kind, name]}
              <div class="run {kind}"><svg class="check" width="18" height="18" viewBox="0 0 18 18"><rect width="18" height="18" rx="2" /><path d="M3.500 9l3.700 3.800L15 4.800" fill="none" stroke="#fff" stroke-width="2" /></svg><i></i><span>{name}</span></div>
            {/each}
          </section>
          <div class="toggle">TOGGLE ALL RUNS</div>
          <div class="dir">tf_files/training_summaries</div>
        </aside>

        <main>
          <div class="search"><svg width="24" height="24" viewBox="0 0 24 24"><path d="M15.500 14h-.79l-.28-.27C15.410 12.590 16 11.110 16 9.500 16 5.910 13.090 3 9.500 3S3 5.910 3 9.500 5.910 16 9.500 16c1.610 0 3.090-.59 4.230-1.570l.27.28v.79l5 4.990L20.490 19l-4.990-5zm-6 0C7.010 14 5 11.990 5 9.500S7.010 5 9.500 5 14 7.010 14 9.500 11.990 14 9.500 14z" /></svg><span>.*</span></div>
          <div class="head first"><span><span class="mute">Tags matching /</span>.*<span class="mute">/</span> (all tags)</span><em>8</em></div>
          <div class="grid">
            {#each charts as c}
              <article class="card row{c.row}">
                <div class="heading">
                  {#if c.float}<b class="tag {c.kind} right">{c.run}</b>{/if}
                  <div class="ttl">{c.title}</div>
                  {#if !c.float}<b class="tag {c.kind}">{c.run}</b>{/if}
                </div>
                <svg class="plot" width="320" height={c.row === 1 ? 170 : 157} viewBox={c.row === 1 ? '0 331 320 170' : '0 597 320 157'}>
                  {#each c.steps as t}
                    {@const y = c.top + ((c.row === 1 ? 482 : 735) - c.top) * t}
                    <path d="M24 {y}H270" stroke="#000" stroke-opacity={c.kind === 'train' ? 0.11 : 0.055} stroke-width={c.kind === 'train' ? 1 : 1.7} />
                  {/each}
                  {#each c.shapes as s}
                    <path d={s.area} fill={s.fill} />
                    {#if s.veil}<path d={s.veil} fill="#fff" fill-opacity="0.4" />{/if}
                    <path d={s.line} fill="none" stroke="#fff" stroke-opacity={s.wash ? 0.8 : c.float ? 0.7 : 0.55} stroke-width={c.float ? 1 : 0.8} />
                  {/each}
                  {#if c.accent}<path d={accentLine} fill="none" stroke="#0468bb" stroke-width="1.200" />{/if}
                  {#each c.ticks as x}<path d="M{x} {c.row === 1 ? 482 : 735}v6" stroke="#d8d8d8" />{/each}
                  <path d="M24 {c.row === 1 ? 482.5 : 735.5}H270" stroke="#e2e2e2" />
                  {#each c.labels as l}<text x={l.x} y={c.row === 1 ? 499 : 752} text-anchor="middle">{l.text}</text>{/each}
                  {#each c.right as r}<path d="M270 {r.y}h6" stroke="#ddd" />{#if r.text}<text x="279" y={r.y + 4}>{r.text}</text>{/if}{/each}
                </svg>
                <svg class="expand" width="14" height="14" viewBox="0 0 14 14" fill="none" stroke="#2f80ed" stroke-width="2"><path d="M5 1H1v4M9 1h4v4M5 13H1V9M9 13h4V9" /></svg>
              </article>
            {/each}
          </div>
          <div class="head"><span>activations</span><em>2</em></div>
          <div class="head"><span class="loose">final_training_ops</span><em>6</em></div>
        </main>
      </div>
    </div>
  </div>
</div>

<style>
  :global(body) { margin: 0; overflow: hidden; }
  .desktop { width: 1920px; height: 1080px; display: flex; flex-direction: column; font-family: Roboto, sans-serif; background: #f5f5f5; }
  .desktop * { box-sizing: border-box; }
  .defs { position: absolute; width: 0; height: 0; }
  svg { flex: none; display: block; }
  i, em { font-style: normal; }
  .menubar { height: 24px; flex: none; display: flex; align-items: center; justify-content: space-between; padding: 0 7px 0 6px; background: linear-gradient(#5b584e, #3e3d39); color: #dfdbd2; font: 14px/24px "Noto Sans", sans-serif; white-space: nowrap; }
  .wtitle { font-weight: bold; letter-spacing: 0.22px; }
  .tray { display: flex; align-items: center; }
  .lang { width: 20px; height: 20px; line-height: 20px; margin: 0 12px; text-align: center; border-radius: 2px; background: #dfdbd2; color: #45433e; font-size: 13px; }
  .t-wifi { margin-left: 12px; }
  .t-bat { margin-left: 12px; }
  .t-pct { margin-left: 4px; width: 50px; }
  .t-time { width: 61px; margin: 0 12px 0 11px; white-space: nowrap; }

  .below { flex: 1; display: flex; min-height: 0; }
  .launcher { width: 81px; flex: none; display: flex; flex-direction: column; gap: 7px; padding: 6px 0 0 6px; background: #5e1051; border-right: 1px solid #7d3a72; }
  .tile { position: relative; width: 68px; height: 68px; border-radius: 5px; flex: none; border: 1px solid rgba(255, 255, 255, 0.2); background: linear-gradient(rgba(255, 255, 255, 0.38), rgba(255, 255, 255, 0.02) 50%, rgba(255, 255, 255, 0.16)); }
  .tile > svg { margin: -1px; }
  .tile.dash { background: radial-gradient(circle at 50% 0, #cf9ac8, #94237f 75%); }
  .tile.files { background: linear-gradient(#b9676a, #8c3346); }
  .tile.chrome { background: linear-gradient(#c9b177, #b08b3d); }
  .tile.term { background: linear-gradient(#cfc4d1, #b9a9bb); }
  .tile.sublime { background: linear-gradient(#909090, #484848 40%, #414141); border: 2px solid #b17345; }
  .tile.sublime > svg { margin: -2px; }
  .tile.studio { background: linear-gradient(#b4d98b, #7cb342 40%, #80b848); }
  .tile.trash { margin-top: 1px; }
  .tri { position: absolute; left: -7px; top: 28px; border: 5px solid transparent; border-left: 6px solid #e2dde1; border-right: 0; }
  .tri.back { left: auto; right: -7px; border-right: 6px solid #e2dde1; border-left: 0; }
  .bars { position: absolute; left: -7px; top: 28px; width: 6px; height: 9px; border: solid #e2dde1; border-width: 3px 0; }

  .browser { flex: 1; display: flex; flex-direction: column; min-width: 0; }
  .tabs { position: relative; height: 29px; flex: none; display: flex; background: #000; padding-left: 22px; font: 14px/29px "Noto Sans", sans-serif; color: #aaa; }
  .tabshape { position: absolute; left: 0; top: 0; }
  .tab { position: relative; width: 193px; display: flex; align-items: center; padding-top: 1px; }
  .fav { margin-right: 6px; width: 16px; }
  .medium { background: #1b1b1b; color: #fff; font: bold 13px/16px "Liberation Serif", serif; text-align: center; }
  .tt { width: 135px; line-height: 24px; margin-top: -1px; overflow: hidden; white-space: nowrap; font-size: 14px; }
  .fade { -webkit-mask-image: linear-gradient(90deg, #000 78%, transparent 99%); mask-image: linear-gradient(90deg, #000 78%, transparent 99%); }
  .lit { color: #b4b4b4; letter-spacing: 0.3px; }
  .x { font: 17px/24px "DejaVu Sans", sans-serif; color: #7d7d7d; margin: -1px 0 0 2px; width: 16px; text-align: center; }
  .profile { position: relative; margin: 3px 6px 0 auto; width: 62px; height: 16px; border: 1px solid #444; display: flex; align-items: center; gap: 7px; padding-left: 8px; color: #ddd; font-size: 13px; }
  .toolbar { height: 37px; flex: none; display: flex; align-items: center; padding: 0 10px; background: linear-gradient(90deg, #020711, #0a0c18); }
  .nav { margin-right: 12px; }
  .url { width: 1453px; height: 26px; margin-left: -1px; flex: none; display: flex; align-items: center; background: #fff; border-radius: 2px; padding: 0 5px 0 6px; color: #858585; font: 14px "Noto Sans", sans-serif; }
  .addr { margin: -2px 0 0 6px; letter-spacing: -0.19px; }
  .addr b { color: #000; font-weight: 400; }
  .star { margin-left: auto; }
  .ext { display: flex; gap: 16px; margin-left: 11px; }
  .ext svg { width: 16px; height: 16px; }
  .dl { position: relative; }
  .dl em { position: absolute; left: 10px; top: 11px; width: 11px; height: 11px; background: #5b5ff0; color: #fff; font: 10px/11px "Noto Sans", sans-serif; text-align: center; border-radius: 1px; }
  .bookmarks { height: 25px; flex: none; display: flex; align-items: center; padding: 0 0 6px 11px; background: linear-gradient(90deg, #020711, #0a0c18); color: #a2a2a2; font: 14px "Noto Sans", sans-serif; white-space: nowrap; }
  .bm { margin-left: 9px; }
  .apps { width: 49px; letter-spacing: 0.5px; }
  .start { width: 120px; margin-left: 11px; letter-spacing: 0.35px; }
  .import { width: 113px; margin-left: 7px; overflow: hidden; -webkit-mask-image: linear-gradient(90deg, #000 82%, transparent 100%); mask-image: linear-gradient(90deg, #000 82%, transparent 100%); }

  .appbar { height: 64px; flex: none; position: relative; display: flex; align-items: center; background: #ff7700; color: #fff; box-shadow: 0 2px 4px rgba(0, 0, 0, 0.4); font-size: 14px; font-weight: 500; }
  .logo { width: 433px; padding-left: 26px; font-size: 20px; letter-spacing: -0.5px; }
  .nt { height: 64px; line-height: 64px; text-align: center; color: #ffd9b8; border-bottom: 2px solid transparent; font-weight: 400; }
  .n1 { width: 202px; }
  .n2 { width: 121px; }
  .n3 { width: 223px; padding-left: 18px; }
  .n4 { width: 192px; }
  .nt.on { color: #fff; border-color: #fff; font-weight: 500; }
  .inactive { margin-left: 12px; width: 203px; height: 27px; display: flex; align-items: center; justify-content: space-between; padding: 0 7px 0 0; border-bottom: 1px solid #ffdcbe; color: #ffd9b8; }
  .actions { margin: 0 24px 0 auto; display: flex; gap: 16px; }
  .actions svg { width: 24px; height: 24px; fill: #fff; }

  .page { flex: 1; display: flex; min-height: 0; }
  aside { width: 350px; display: flex; flex-direction: column; padding-bottom: 23px; color: #757575; }
  h3 { margin: 0; font: 400 14px/18px Roboto, sans-serif; color: #4a4a4a; letter-spacing: 0.02px; }
  .mode { height: 95px; padding: 14px 0 0 30px; border-bottom: 1px solid #d6d6d6; }
  .btns { display: flex; gap: 12px; margin-top: 14px; }
  .btns span { width: 96px; height: 33px; line-height: 33px; text-align: center; font-size: 13px; border-radius: 3px; }
  .btns .sel { background: #757575; color: #fff; }
  .btns span + .sel { margin-left: -1px; }
  .runs { padding: 14px 0 0 30px; }
  .filter { height: 30px; margin-top: 6px; margin-bottom: 13px; padding-top: 10px; font-size: 14px; line-height: 16px; border-bottom: 1px solid #6f6f6f; letter-spacing: 0.02px; }
  .run { display: flex; align-items: center; height: 18px; padding-left: 4px; margin-bottom: 10px; color: #000; font-size: 13px; }
  .run i { width: 16px; height: 16px; border: 2px solid; border-radius: 50%; margin: 0 9px 0 7px; }
  .run span { margin-top: -3px; }
  .run.train i { border-color: #ff6a3a; }
  .run.valid i { border-color: #1a6fc4; }
  .run.train rect { fill: #ff5f2a; }
  .run.valid rect { fill: #0068c0; }
  .toggle { margin: auto 4px 0 30px; height: 33px; line-height: 33px; text-align: center; background: #dfdfdf; border-radius: 3px; font-size: 13px; }
  .dir { margin: 4px 0 0 30px; font-size: 13px; line-height: 18px; }

  main { width: 1454px; margin-left: 30px; display: flex; flex-direction: column; color: #000; }
  .search { height: 43px; margin-bottom: 27px; display: flex; align-items: flex-end; border-bottom: 1px solid #757575; font-size: 16px; }
  .search svg { margin-bottom: 0; width: 24px; }
  .search span { line-height: 26px; }
  .head { height: 35px; margin-bottom: 1px; flex: none; display: flex; align-items: center; justify-content: space-between; padding: 0 20px 0 15px; background: #fff; box-shadow: 0 1px 3px rgba(0, 0, 0, 0.35); font-size: 14px; letter-spacing: 0.15px; }
  .loose { letter-spacing: 0.46px; }
  .head.first { position: relative; margin-bottom: 0; font-size: 14.500px; letter-spacing: -0.03px; }
  .head.first > span { padding-top: 2px; }
  .head em { color: #9a9a9a; font-size: 12px; margin-top: -2px; }
  .mute { color: #9e9e9e; }
  .grid { height: 531px; margin-bottom: 1px; flex: none; display: grid; grid-template-columns: repeat(4, 340px); grid-template-rows: 250px 250px; padding: 11px 0 0 15px; background: #fff; border: 1px solid #dcdcdc; border-top: 0; }
  .card { display: flex; flex-direction: column; width: 300px; }
  .heading { height: 36px; padding-top: 4px; }
  .row2 .heading { height: 52px; }
  .ttl { width: 297px; font-size: 14px; line-height: 16px; word-break: break-all; }
  .tag { display: block; width: max-content; height: 16px; padding: 0 4px; border-radius: 3px; font-size: 11px; line-height: 15px; }
  .tag.train { background: #ff5f2a; color: #000; }
  .tag.valid { background: #0068c0; color: #e6eef8; }
  .right { float: right; margin: -4px 3px 0 0; }
  .right + .ttl { width: auto; }
  .plot { overflow: visible; }
  .plot text { font-size: 11px; fill: #aaa; }
  .expand { margin: 10px 0 0 9px; }
  .row2 .expand { margin-top: 8px; }
</style>
